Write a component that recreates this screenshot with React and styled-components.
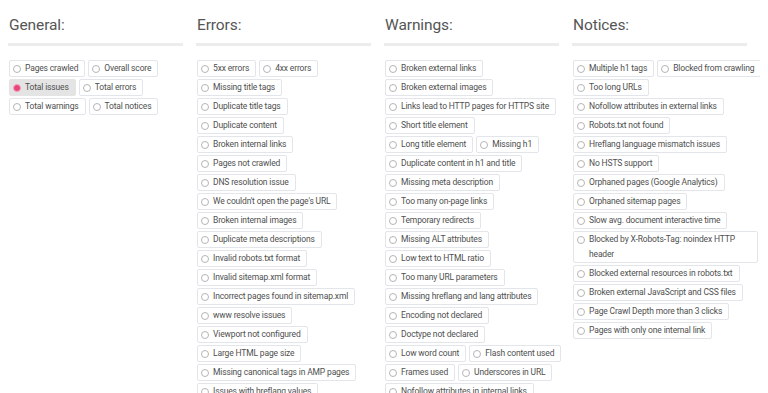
import React from "react";
import styled, { createGlobalStyle } from "styled-components";

const Global = createGlobalStyle`
  html, body { background: #fff; }
  body {
    margin: 8px;
    font-family: Roboto, "Open Sans", "Liberation Sans", sans-serif;
    color: #555;
    overflow: hidden;
  }
`;

const Grid = styled.div`
  display: grid;
  grid-template-columns: repeat(4, 186px);
  column-gap: 2px;
  align-items: start;
`;

const Column = styled.section`
  display: flex;
  flex-direction: column;
  min-width: 0;
`;

const Heading = styled.h2`
  margin: 0;
  padding: 7px 0 0 1px;
  height: 28px;
  font-size: 15.5px;
  font-weight: 400;
  color: #555;
  letter-spacing: -0.1px;
  line-height: 20px;
`;

const Divider = styled.div`
  width: 175px;
  height: 3px;
  background: #ececec;
  margin: 0 0 14px 0;
`;

const Rows = styled.div`
  display: flex;
  flex-direction: column;
  gap: 2px;
  padding-left: 1px;
`;

const Row = styled.div`
  display: flex;
  gap: 3px;
  align-items: flex-start;
`;

const Chip = styled.label`
  flex: none;
  display: inline-flex;
  align-items: flex-start;
  box-sizing: border-box;
  max-width: 185px;
  padding: 0 6px 0 3px;
  border: 1px solid ${(p) => (p.$active ? "#e4e4e4" : "#e2e5ea")};
  background: ${(p) => (p.$active ? "#e4e4e4" : "#fff")};
  border-radius: 2px;
  font-size: 8.5px;
  line-height: 15px;
  color: #4f4f4f;
  letter-spacing: -0.15px;
`;

const Radio = styled.span`
  flex: none;
  box-sizing: border-box;
  width: 8px;
  height: 8px;
  margin: 3.5px 4px 0 0;
  border-radius: 50%;
  border: 1px solid ${(p) => (p.$active ? "#f4a3bd" : "#b5b5b5")};
  background: ${(p) => (p.$active ? "#e8457b" : "#fff")};
`;

const Text = styled.span`
  min-width: 0;
`;

const columns = [
  {
    title: "General:",
    rows: [
      ["Pages crawled", "Overall score"],
      [{ t: "Total issues", active: true }, "Total errors"],
      ["Total warnings", "Total notices"],
    ],
  },
  {
    title: "Errors:",
    rows: [
      ["5xx errors", "4xx errors"],
      ["Missing title tags"],
      ["Duplicate title tags"],
      ["Duplicate content"],
      ["Broken internal links"],
      ["Pages not crawled"],
      ["DNS resolution issue"],
      ["We couldn't open the page's URL"],
      ["Broken internal images"],
      ["Duplicate meta descriptions"],
      ["Invalid robots.txt format"],
      ["Invalid sitemap.xml format"],
      ["Incorrect pages found in sitemap.xml"],
      ["www resolve issues"],
      ["Viewport not configured"],
      ["Large HTML page size"],
      ["Missing canonical tags in AMP pages"],
      ["Issues with hreflang values"],
    ],
  },
  {
    title: "Warnings:",
    rows: [
      ["Broken external links"],
      ["Broken external images"],
      ["Links lead to HTTP pages for HTTPS site"],
      ["Short title element"],
      ["Long title element", "Missing h1"],
      ["Duplicate content in h1 and title"],
      ["Missing meta description"],
      ["Too many on-page links"],
      ["Temporary redirects"],
      ["Missing ALT attributes"],
      ["Low text to HTML ratio"],
      ["Too many URL parameters"],
      ["Missing hreflang and lang attributes"],
      ["Encoding not declared"],
      ["Doctype not declared"],
      ["Low word count", "Flash content used"],
      ["Frames used", "Underscores in URL"],
      ["Nofollow attributes in internal links"],
    ],
  },
  {
    title: "Notices:",
    rows: [
      ["Multiple h1 tags", "Blocked from crawling"],
      ["Too long URLs"],
      ["Nofollow attributes in external links"],
      ["Robots.txt not found"],
      ["Hreflang language mismatch issues"],
      ["No HSTS support"],
      ["Orphaned pages (Google Analytics)"],
      ["Orphaned sitemap pages"],
      ["Slow avg. document interactive time"],
      ["Blocked by X-Robots-Tag: noindex HTTP header"],
      ["Blocked external resources in robots.txt"],
      ["Broken external JavaScript and CSS files"],
      ["Page Crawl Depth more than 3 clicks"],
      ["Pages with only one internal link"],
    ],
  },
];

function Item({ item }) {
  const t = typeof item === "string" ? item : item.t;
  const active = typeof item === "object" && item.active;
  return (
    <Chip $active={active}>
      <Radio $active={active} />
      <Text>{t}</Text>
    </Chip>
  );
}

export default function App() {
  return (
    <>
      <Global />
      <Grid>
        {columns.map((col) => (
          <Column key={col.title}>
            <Heading>{col.title}</Heading>
            <Divider />
            <Rows>
              {col.rows.map((row, i) => (
                <Row key={i}>
                  {row.map((it, j) => (
                    <Item key={j} item={it} />
                  ))}
                </Row>
              ))}
            </Rows>
          </Column>
        ))}
      </Grid>
    </>
  );
}
